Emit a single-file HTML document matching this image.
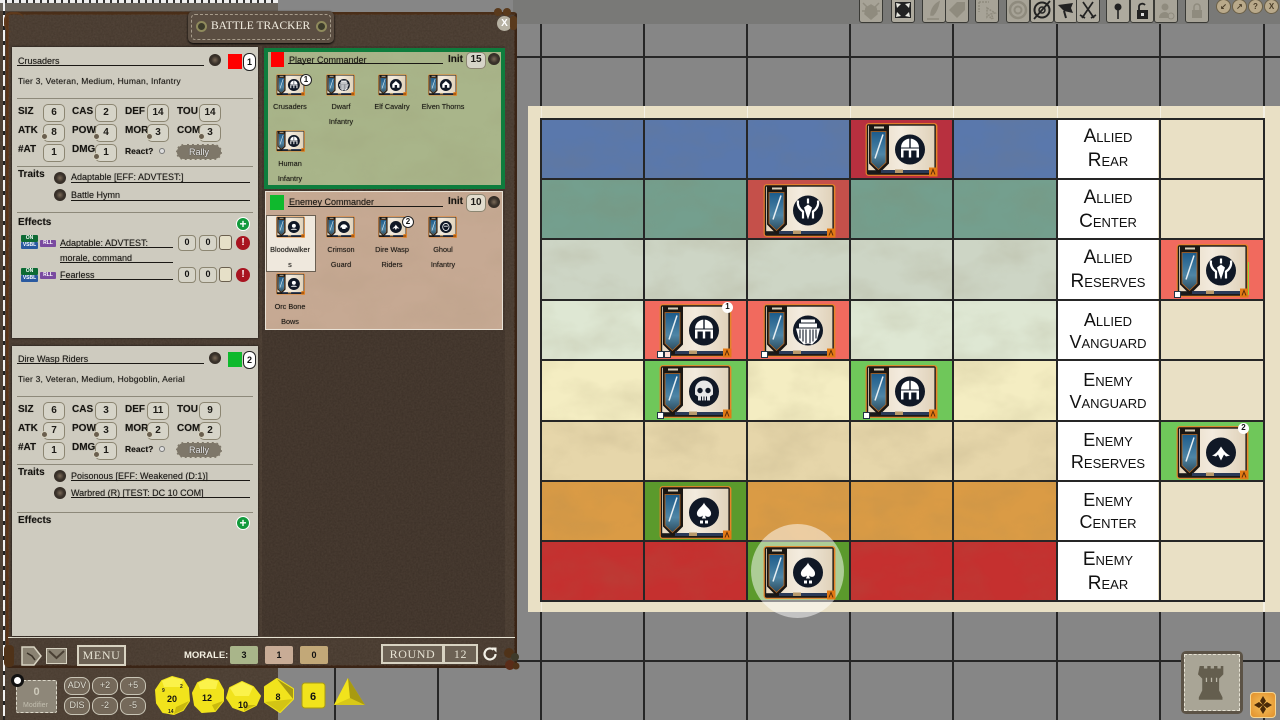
<!DOCTYPE html>
<html><head><meta charset="utf-8"><title>Battle Tracker</title>
<style>
html,body{margin:0;padding:0;width:1280px;height:720px;overflow:hidden;background:#848484;font-family:"Liberation Sans",sans-serif;color:#111}
div,svg,span{position:absolute;box-sizing:border-box}
.x{white-space:nowrap;line-height:12px;font-size:9px;color:#15130f;text-shadow:0 0 1px rgba(0,0,0,.35)}
.b{font-weight:bold;font-size:10px}
.l{height:1px;background:#1a1814}
.d{height:1px;background:#8d897a;left:17px;width:236px}
.v{width:2px;background:#262626}
.h{height:2px;background:#262626}
.s{width:22px;height:18px;border:1.5px solid #8c8672;border-radius:5px;background:#d6d4c8;text-align:center;font:bold 10px/15px "Liberation Sans",sans-serif;color:#1c1a16}
.r{width:7px;height:7px;border-radius:50%;background:#6a5f4e;border:1.5px solid #d8d4c2}
.k{width:12px;height:12px;border-radius:50%;background:radial-gradient(circle,#7a6a58 0,#3b332b 45%,#2a241e 100%)}
.c{position:absolute;text-align:center;font-size:7.3px;line-height:15px;width:52px;color:#15130f;text-shadow:0 0 1px rgba(0,0,0,.35)}
.tk{width:73px;height:55px}
.sm{width:29px;height:22px}
.bd{width:12px;height:12px;border-radius:50%;background:#fff;border:1px solid #222;font:bold 8px/10px "Liberation Sans",sans-serif;text-align:center;color:#111}
.lab{left:1058px;width:100px;text-align:center;font-size:19px;line-height:24px;font-variant:small-caps;color:#111;background:#fff;height:59px;padding-top:6px}
.tb{top:-3px;width:24px;height:26px;background:#a7a397;border:1px solid #3a3a36;border-radius:3px}
.on{background:#aeaa9e}
.rb{top:-1px;width:15px;height:15px;border-radius:50%;background:#b9a98a;border:1px solid #6b6048;font:bold 8px/13px "Liberation Sans",sans-serif;color:#4a3d28;text-align:center}
.m{width:26px;height:18px;border:1.5px solid #c9c5b6;border-radius:8px;background:#75695a;color:#e8e4d6;font-size:9px;line-height:15px;text-align:center;text-shadow:0 0 1px #222}
.bar{border:2px solid #d8d3c2;background:#6c6154;color:#e6e2d3;font:12px/17px "Liberation Serif",serif;text-align:center;letter-spacing:.6px}
.mr{top:646px;width:28px;height:18px;border-radius:2px;font:bold 9px/18px "Liberation Sans",sans-serif;text-align:center}
.ef{width:18px;height:16px;border:1.5px solid #8c8672;border-radius:4px;background:#d6d4c8;text-align:center;font:bold 9px/13px "Liberation Sans",sans-serif}
.q{width:7px;height:7px;background:#fff;border:1px solid #234}
</style></head><body>
<svg width="0" height="0" style="left:0;top:0">
<defs>
<linearGradient id="bl" x1="0" y1="0" x2="0" y2="1"><stop offset="0" stop-color="#1c5a8a"/><stop offset=".6" stop-color="#4f86a6"/><stop offset="1" stop-color="#2c4a5c"/></linearGradient>
<linearGradient id="cr" x1="0" y1="0" x2="1" y2="0"><stop offset="0" stop-color="#e6d8c0"/><stop offset=".5" stop-color="#f3ebde"/><stop offset="1" stop-color="#e0d2ba"/></linearGradient>
<filter id="lea" x="0" y="0" width="100%" height="100%"><feTurbulence type="fractalNoise" baseFrequency=".55" numOctaves="3" seed="4"/><feColorMatrix values="0 0 0 0 .1  0 0 0 0 .07  0 0 0 0 .05  .9 0 0 0 -.15"/></filter>
<filter id="par" x="0" y="0" width="100%" height="100%"><feTurbulence type="fractalNoise" baseFrequency=".018 .03" numOctaves="4" seed="9"/><feColorMatrix values="0 0 0 0 .25  0 0 0 0 .2  0 0 0 0 .1  1.6 0 0 0 -.62"/></filter>
<g id="tok">
<rect x=".6" y=".6" width="71.8" height="52.8" rx="3" fill="#e6842a"/>
<rect x="1.8" y="1.8" width="69" height="50.4" rx="2" fill="#1a1a1a"/>
<rect x="3.200" y="3.200" width="66.200" height="44.500" fill="url(#cr)"/>
<polygon points="4,2.500 24,2.500 24,41 14,51 4,41" fill="#1a1612"/>
<polygon points="6,9 21,9 21,40 13.5,47 6,40" fill="url(#bl)" stroke="#b8661f" stroke-width=".8"/>
<line x1="10" y1="36" x2="18" y2="12" stroke="#e6eef2" stroke-width="1.5"/>
<rect x="9" y="4" width="10" height="2" fill="#d8cdb8"/>
<rect x="16" y="47.5" width="50" height="3" fill="#2a3a58"/>
<rect x="30" y="47" width="8" height="3.5" fill="#b89a6c"/>
<rect x="64" y="45" width="8.5" height="9" fill="#e27a14"/>
<path d="M66 52l2-5 2 5" stroke="#5a2a08" fill="none"/>
<circle cx="45" cy="27" r="15" fill="#101826"/>
</g>
<g id="helm" fill="#fff"><path d="M36 25a9 9 0 0 1 8.300-8.900V25zM45.700 16.100A9 9 0 0 1 54 25h-8.300z"/><rect x="36" y="26" width="18" height="2"/><rect x="36" y="28" width="2.500" height="7"/><rect x="43.800" y="28" width="2.400" height="7"/><rect x="51.500" y="28" width="2.500" height="7"/></g>
<g id="dwarf" fill="#fff"><path d="M38 16h14v3H38zM36 20h18v4H36z"/><path d="M33 25h24l-3 11-5 5-4-1-4 1-5-5z"/><path d="M37 26v9M40 26v12M43 26v14M47 26v14M50 26v12M53 26v9" stroke="#101826" stroke-width="1.100"/></g>
<g id="skull" fill="#e8e8e8"><path d="M36 25a9 9 0 0 1 18 0v5l-3 2v4H39v-4l-3-2z"/><circle cx="41" cy="26" r="2.700" fill="#101826"/><circle cx="49" cy="26" r="2.700" fill="#101826"/><path d="M42.500 32v4M45 32v4M47.500 32v4" stroke="#101826"/></g>
<g id="spade" fill="#fff"><path d="M45 17c1 4 8 7 7 12-1 3-4 3-6 1l1 3h-4l1-3c-2 2-5 2-6-1-1-5 6-8 7-12z"/><rect x="41" y="35" width="3" height="3"/><rect x="46" y="35" width="3" height="3"/></g>
<g id="elf" fill="none" stroke="#fff" stroke-width="2.200"><path d="M35 17c-1 6 2 9 5 11v7M55 17c1 6-2 9-5 11v7M45 15v5"/><path d="M41 24l4-3 4 3-4 12z" fill="#fff" stroke="none"/></g>
<g id="hood" fill="#fff"><path d="M36 30c3-1 6-4 9-9 3 5 6 8 9 9l-4 1-2-2-3 6-3-6-2 2z"/></g>
<g id="orc" fill="#fff"><circle cx="45" cy="24" r="5"/><path d="M37 34c2-4 14-4 16 0z"/></g>
<g id="dome" fill="#fff"><path d="M36 29a9 9 0 0 1 18 0l-4-1-1 4h-8l-1-4z"/></g>
<g id="house" fill="#fff"><path d="M45 17l9 8v9H36v-9zM42 27v7h6v-7z" fill-rule="evenodd"/></g>
<g id="face" fill="none" stroke="#fff" stroke-width="2"><ellipse cx="45" cy="27" rx="8" ry="9"/><path d="M40 25h10"/></g>
</defs></svg>

<!-- grey world with grid -->
<div style="left:0;top:0;width:1280px;height:720px;background:#868686"></div>
<div style="left:513px;top:0;width:767px;height:24px;background:#797977"></div>
<div class="v" style="left:334px;top:660px;height:60px"></div>
<div class="v" style="left:437px;top:660px;height:60px"></div>
<div class="v" style="left:540px;top:24px;height:696px"></div>
<div class="v" style="left:643px;top:24px;height:696px"></div>
<div class="v" style="left:746px;top:24px;height:696px"></div>
<div class="v" style="left:849px;top:24px;height:696px"></div>
<div class="v" style="left:952px;top:24px;height:696px"></div>
<div class="v" style="left:1056px;top:24px;height:696px"></div>
<div class="v" style="left:1159px;top:24px;height:696px"></div>
<div class="v" style="left:1263px;top:24px;height:696px"></div>
<div class="h" style="left:513px;top:56px;width:767px"></div>
<div class="h" style="left:513px;top:660px;width:767px"></div>

<!-- map -->
<div style="left:528px;top:106px;width:752px;height:506px;background:#e9e0c5"></div>
<div style="left:541px;top:106px;width:1px;height:506px;background:#fff6"></div>
<div style="left:644px;top:106px;width:1px;height:12px;background:#fff8"></div>
<div style="left:747px;top:106px;width:1px;height:12px;background:#fff8"></div>
<div style="left:850px;top:106px;width:1px;height:12px;background:#fff8"></div>
<div style="left:953px;top:106px;width:1px;height:12px;background:#fff8"></div>
<div style="left:1057px;top:106px;width:1px;height:12px;background:#fff8"></div>
<div style="left:1160px;top:106px;width:1px;height:12px;background:#fff8"></div>
<div style="left:1263px;top:106px;width:2px;height:506px;background:#fff8"></div>

<div style="left:541px;top:119px;width:515px;height:60px;background:#5a78ac"></div>
<div style="left:541px;top:180px;width:515px;height:59px;background:#749f8e"></div>
<div style="left:541px;top:240px;width:515px;height:60px;background:#cdd5c5"></div>
<div style="left:541px;top:301px;width:515px;height:59px;background:#dee7d3"></div>
<div style="left:541px;top:361px;width:515px;height:60px;background:#f4edc2"></div>
<div style="left:541px;top:422px;width:515px;height:59px;background:#e6d6aa"></div>
<div style="left:541px;top:482px;width:515px;height:59px;background:#da9b45"></div>
<div style="left:541px;top:542px;width:515px;height:59px;background:#c5302f"></div>
<svg style="left:541px;top:119px" width="515" height="482"><rect width="515" height="482" filter="url(#par)" opacity=".18"/></svg>
<!-- highlighted cells -->
<div style="left:851px;top:119px;width:102px;height:60px;background:#b8303f"></div>
<div style="left:748px;top:180px;width:102px;height:59px;background:#c5504a"></div>
<div style="left:1161px;top:240px;width:103px;height:60px;background:#f16a5e"></div>
<div style="left:645px;top:301px;width:102px;height:59px;background:#f16a5e"></div>
<div style="left:748px;top:301px;width:102px;height:59px;background:#f16a5e"></div>
<div style="left:645px;top:361px;width:102px;height:60px;background:#6fc75a"></div>
<div style="left:851px;top:361px;width:102px;height:60px;background:#6fc75a"></div>
<div style="left:1161px;top:422px;width:103px;height:59px;background:#6fc75a"></div>
<div style="left:645px;top:482px;width:102px;height:59px;background:#5b9a2c"></div>
<div style="left:748px;top:542px;width:102px;height:59px;background:#5b9a2c"></div>

<div class="lab" style="top:119px">Allied<br>Rear</div>
<div class="lab" style="top:180px">Allied<br>Center</div>
<div class="lab" style="top:240px">Allied<br>Reserves</div>
<div class="lab" style="top:301px;height:59px;padding-top:8px;line-height:22px;font-size:18px">Allied<br>Vanguard</div>
<div class="lab" style="top:361px;height:60px;padding-top:8px;line-height:22px;font-size:18px">Enemy<br>Vanguard</div>
<div class="lab" style="top:422px;height:59px;padding-top:7px;line-height:22px;font-size:18px">Enemy<br>Reserves</div>
<div class="lab" style="top:482px;height:59px;padding-top:7px;line-height:22px;font-size:18px">Enemy<br>Center</div>
<div class="lab" style="top:542px;height:59px;padding-top:6px">Enemy<br>Rear</div>

<div class="h" style="left:541px;top:118px;width:723px"></div>
<div class="h" style="left:541px;top:178px;width:723px"></div>
<div class="h" style="left:541px;top:238px;width:723px"></div>
<div class="h" style="left:541px;top:299px;width:723px"></div>
<div class="h" style="left:541px;top:359px;width:723px"></div>
<div class="h" style="left:541px;top:420px;width:723px"></div>
<div class="h" style="left:541px;top:480px;width:723px"></div>
<div class="h" style="left:541px;top:540px;width:723px"></div>
<div class="h" style="left:541px;top:600px;width:723px"></div>
<div class="v" style="left:540px;top:118px;height:484px"></div>
<div class="v" style="left:643px;top:118px;height:484px"></div>
<div class="v" style="left:746px;top:118px;height:484px"></div>
<div class="v" style="left:849px;top:118px;height:484px"></div>
<div class="v" style="left:952px;top:118px;height:484px"></div>
<div class="v" style="left:1056px;top:118px;height:484px"></div>
<div class="v" style="left:1159px;top:118px;height:484px"></div>
<div class="v" style="left:1263px;top:118px;height:484px"></div>

<!-- map tokens -->
<svg class="tk" style="left:865px;top:122px" viewBox="0 0 73 54"><use href="#tok"/><use href="#helm"/></svg>
<svg class="tk" style="left:763px;top:183px" viewBox="0 0 73 54"><use href="#tok"/><use href="#elf"/></svg>
<svg class="tk" style="left:1176px;top:243px" viewBox="0 0 73 54"><use href="#tok"/><use href="#elf"/></svg>
<div class="q" style="left:1174px;top:291px"></div>
<div style="left:1248px;top:262px;width:1px;height:33px;background:#8fd23a"></div>
<svg class="tk" style="left:659px;top:303px" viewBox="0 0 73 54"><use href="#tok"/><use href="#helm"/></svg>
<div class="bd" style="left:722px;top:302px;width:11px;height:11px;line-height:9px;border:0">1</div>
<div class="q" style="left:657px;top:351px"></div><div class="q" style="left:664px;top:351px;background:#ffe0d8"></div>
<svg class="tk" style="left:763px;top:303px" viewBox="0 0 73 54"><use href="#tok"/><use href="#dwarf"/></svg>
<div class="q" style="left:761px;top:351px"></div>
<svg class="tk" style="left:659px;top:364px" viewBox="0 0 73 54"><use href="#tok"/><use href="#skull"/></svg>
<div class="q" style="left:657px;top:412px"></div>
<svg class="tk" style="left:865px;top:364px" viewBox="0 0 73 54"><use href="#tok"/><use href="#helm"/></svg>
<div class="q" style="left:863px;top:412px"></div>
<svg class="tk" style="left:1176px;top:425px" viewBox="0 0 73 54"><use href="#tok"/><use href="#hood"/></svg>
<div class="bd" style="left:1238px;top:423px;width:11px;height:11px;line-height:9px;border:0">2</div>
<svg class="tk" style="left:659px;top:485px" viewBox="0 0 73 54"><use href="#tok"/><use href="#spade"/></svg>
<div style="left:751px;top:524px;width:93px;height:94px;border-radius:50%;background:rgba(255,255,255,.5)"></div>
<svg class="tk" style="left:763px;top:545px" viewBox="0 0 73 54"><use href="#tok"/><use href="#spade"/></svg>

<!-- toolbar -->
<div class="tb" style="left:859px"><svg width="22" height="24" viewBox="0 0 22 24"><path d="M11 7l5 3 1 6-6 5-6-5 1-6zM3 5l4 4M19 5l-4 4M2 13h3M20 13h-3" stroke="#8f8b7e" stroke-width="1.500" fill="#8f8b7e"/></svg></div>
<div class="tb on" style="left:891px"><svg width="22" height="24" viewBox="0 0 22 24"><rect x="3" y="4" width="16" height="16" fill="#222"/><path d="M4 5l5 1-4 4zM18 5l-5 1 4 4zM4 19l5-1-4-4zM18 19l-5-1 4-4z" fill="#e8e8e0"/></svg></div>
<div class="tb" style="left:922px"><svg width="22" height="24" viewBox="0 0 22 24"><path d="M8 17c0-6 4-11 8-13-1 5-3 10-6 13zM4 21h12" stroke="#8f8b7e" stroke-width="1.500" fill="#8f8b7e"/></svg></div>
<div class="tb" style="left:945px"><svg width="22" height="24" viewBox="0 0 22 24"><path d="M3 12l8-8h8v8l-8 8z" fill="#8f8b7e"/></svg></div>
<div class="tb" style="left:975px"><svg width="22" height="24" viewBox="0 0 22 24"><path d="M3 4h10M3 4v10M11 10l8 5-4 1 2 4-2 1-2-4-2 2z" stroke="#8f8b7e" stroke-width="1.500" stroke-dasharray="2 1" fill="none"/></svg></div>
<div class="tb" style="left:1006px"><svg width="22" height="24" viewBox="0 0 22 24"><circle cx="11" cy="12" r="8" fill="none" stroke="#8f8b7e" stroke-width="2.500"/><circle cx="11" cy="12" r="3.500" fill="none" stroke="#8f8b7e" stroke-width="2"/></svg></div>
<div class="tb on" style="left:1030px"><svg width="22" height="24" viewBox="0 0 22 24"><circle cx="11" cy="12" r="7.500" fill="none" stroke="#222" stroke-width="2"/><circle cx="11" cy="12" r="3" fill="none" stroke="#222" stroke-width="1.500"/><path d="M3 21L19 3" stroke="#222" stroke-width="1.800"/></svg></div>
<div class="tb on" style="left:1054px"><svg width="22" height="24" viewBox="0 0 22 24"><path d="M3 7l15-2-2 5 2 5-9-2z" fill="#222"/><path d="M9 13l2 7" stroke="#222" stroke-width="2"/></svg></div>
<div class="tb on" style="left:1076px"><svg width="22" height="24" viewBox="0 0 22 24"><path d="M6 4l11 16M16 4L5 20M3 17l5 3M19 17l-5 3" stroke="#222" stroke-width="1.700"/></svg></div>
<div class="tb on" style="left:1106px"><svg width="22" height="24" viewBox="0 0 22 24"><circle cx="11" cy="9" r="3.500" fill="#222"/><path d="M11 12v9" stroke="#222" stroke-width="1.600"/></svg></div>
<div class="tb on" style="left:1130px"><svg width="22" height="24" viewBox="0 0 22 24"><rect x="6" y="12" width="11" height="9" fill="#222"/><path d="M8 12V8a3.500 3.500 0 0 1 6-1" stroke="#222" stroke-width="1.800" fill="none"/><rect x="10" y="15" width="3" height="3" fill="#ddd"/></svg></div>
<div class="tb" style="left:1154px"><svg width="22" height="24" viewBox="0 0 22 24"><circle cx="10" cy="9" r="3.500" fill="#8f8b7e"/><path d="M4 20c0-4 3-6 6-6s4 2 4 6z" fill="#8f8b7e"/><circle cx="16" cy="18" r="3" fill="none" stroke="#8f8b7e"/></svg></div>
<div class="tb" style="left:1185px"><svg width="22" height="24" viewBox="0 0 22 24"><rect x="6" y="12" width="10" height="8" fill="#8f8b7e"/><path d="M8 12V9a3 3 0 0 1 6 0v3" stroke="#8f8b7e" stroke-width="1.500" fill="none"/></svg></div>
<div class="rb" style="left:1216px">&#8601;</div>
<div class="rb" style="left:1232px">&#8599;</div>
<div class="rb" style="left:1248px">?</div>
<div class="rb" style="left:1264px">X</div>

<!-- tower + orange -->
<div style="left:1181px;top:651px;width:62px;height:63px;background:#5c5346;border-radius:5px"></div>
<div style="left:1184px;top:654px;width:56px;height:57px;background:#a9a596;border:1px dashed #e6e2d4"></div>
<svg style="left:1198px;top:662px" width="27" height="40" viewBox="0 0 32 44"><path d="M2 3h5v3h4V3h4v3h4V3h4v3h4V3h3v10l-5 5v14l4 8v3H1v-3l4-8V18l-5-5z" fill="#645e4e"/><path d="M10 17v5M16 17v5M22 17v5" stroke="#bdb9aa" stroke-width="1.500"/></svg>
<div style="left:1250px;top:692px;width:26px;height:26px;background:radial-gradient(circle,#f6c25e,#e2902a);border:1.500px solid #f6d692;border-radius:4px"></div>
<svg style="left:1252px;top:694px" width="22" height="22" viewBox="0 0 22 22"><path d="M11 2l3 5-3 4-3-4zM11 20l3-5-3-4-3 4zM2 11l5-3 4 3-4 3zM20 11l-5-3-4 3 4 3z" fill="#4a2a08"/></svg>

<!-- back leather strip -->
<div style="left:0;top:0;width:278px;height:720px;background:#4a3d31"></div>
<svg style="left:0;top:0" width="278" height="720"><rect width="278" height="720" filter="url(#lea)"/></svg>
<div style="left:0;top:3px;width:278px;height:8px;background:#6a645c"></div>
<div style="left:0;top:0;width:278px;height:3px;background:repeating-linear-gradient(90deg,#eee 0 5px,#333 5px 7px)"></div>
<div style="left:3px;top:0;width:1.500px;height:720px;background:repeating-linear-gradient(180deg,#f2f2f2 0 11px,#222 11px 15px)"></div>

<!-- panel -->
<div style="left:6px;top:12px;width:511px;height:656px;background:#46392e;border-radius:3px;border:3px solid #3a2415;border-left-color:#5a3418;border-top-color:#4a2e18"></div>
<svg style="left:8px;top:14px" width="507" height="652"><rect width="507" height="652" filter="url(#lea)"/></svg>
<div style="left:262px;top:46px;width:243px;height:590px;background:#3e3229"></div>
<svg style="left:262px;top:46px" width="243" height="590"><rect width="243" height="590" filter="url(#lea)" opacity=".7"/></svg>
<div style="left:8px;top:637px;width:507px;height:1px;background:#e8e4d4"></div>
<div style="left:4px;top:12px;width:20px;height:20px;border:2px solid #5f3a1c;border-radius:8px;border-right:0;border-bottom:0"></div>

<!-- title badge -->
<div style="left:188px;top:11px;width:146px;height:32px;background:#5b4e42;border-radius:5px;box-shadow:0 1px 2px #000"></div>
<div style="left:191px;top:14px;width:140px;height:26px;border:1px dashed #a89d8c;border-radius:4px"></div>
<div style="left:196px;top:21px;width:11px;height:11px;border-radius:50%;background:#3b3a2a;border:2px solid #8f8a5c"></div>
<div style="left:316px;top:21px;width:11px;height:11px;border-radius:50%;background:#3b3a2a;border:2px solid #8f8a5c"></div>
<div class="x" style="left:211px;top:19px;color:#f3efe2;font:11.500px/14px 'Liberation Serif',serif;text-shadow:none">BATTLE TRACKER</div>
<div style="left:497px;top:16px;width:15px;height:15px;border-radius:50%;background:#b6b1a2;color:#fff;font:bold 10px/15px 'Liberation Sans';text-align:center">X</div>
<div style="left:494px;top:8px;width:8px;height:8px;border-radius:50%;background:#5a3a1c"></div>
<div style="left:503px;top:8px;width:8px;height:8px;border-radius:50%;background:#5a3a1c"></div>
<div style="left:510px;top:16px;width:7px;height:14px;border-radius:3px;background:#5a3a1c"></div>

<!-- sheet 1 -->
<div style="left:12px;top:47px;width:246px;height:291px;background:#cecbbf;box-shadow:0 0 2px #111"></div>
<!-- sheet 2 -->
<div style="left:12px;top:346px;width:246px;height:290px;background:#cecbbf;box-shadow:0 0 2px #111"></div>

<div style="left:0;top:0;width:0;height:0">
<div class="x" style="left:18px;top:55px">Crusaders</div><div class="l" style="left:17px;top:65px;width:187px"></div>
<div class="k" style="left:209px;top:54px"></div>
<div style="left:228px;top:54px;width:14px;height:15px;background:#f00"></div>
<div class="bd" style="left:243px;top:53px;width:13px;height:18px;border-radius:6px;font-size:9px;line-height:16px">1</div>
<div class="x" style="left:18px;top:75px;font-size:8.500px;letter-spacing:.18px">Tier 3, Veteran, Medium, Human, Infantry</div>
<div class="d" style="top:98px"></div>
<div class="x b" style="left:18px;top:106px">SIZ</div><div class="s" style="left:43px;top:104px">6</div>
<div class="x b" style="left:72px;top:106px">CAS</div><div class="s" style="left:95px;top:104px">2</div>
<div class="x b" style="left:125px;top:106px">DEF</div><div class="s" style="left:147px;top:104px">14</div>
<div class="x b" style="left:177px;top:106px">TOU</div><div class="s" style="left:199px;top:104px">14</div>
<div class="x b" style="left:18px;top:125px">ATK</div><div class="s" style="left:43px;top:124px">8</div><div class="r" style="left:41px;top:133px"></div>
<div class="x b" style="left:72px;top:125px">POW</div><div class="s" style="left:95px;top:124px">4</div><div class="r" style="left:93px;top:133px"></div>
<div class="x b" style="left:125px;top:125px">MOR</div><div class="s" style="left:147px;top:124px">3</div><div class="r" style="left:146px;top:133px"></div>
<div class="x b" style="left:177px;top:125px">COM</div><div class="s" style="left:199px;top:124px">3</div><div class="r" style="left:198px;top:133px"></div>
<div class="x b" style="left:18px;top:144px">#AT</div><div class="s" style="left:43px;top:144px">1</div>
<div class="x b" style="left:72px;top:144px">DMG</div><div class="s" style="left:95px;top:144px">1</div><div class="r" style="left:93px;top:153px"></div>
<div class="x" style="left:125px;top:145px;font-weight:bold;font-size:8.500px">React?</div>
<div style="left:159px;top:148px;width:6px;height:6px;border-radius:50%;border:1px solid #777;background:#ddd"></div>
<div style="left:176px;top:144px;width:46px;height:16px;border-radius:8px;background:#7e7769;border:1px dashed #cfcbbc;color:#eee;font:9px/14px 'Liberation Sans';text-align:center;text-shadow:0 0 1px #000">Rally</div>
<div class="d" style="top:166px"></div>
<div class="x b" style="left:18px;top:169px">Traits</div>
<div class="k" style="left:54px;top:172px"></div><div class="x" style="left:71px;top:171px">Adaptable [EFF: ADVTEST:]</div><div class="l" style="left:71px;top:182px;width:179px"></div>
<div class="k" style="left:54px;top:189px"></div><div class="x" style="left:71px;top:189px">Battle Hymn</div><div class="l" style="left:71px;top:200px;width:179px"></div>
<div class="d" style="top:212px"></div>
<div class="x b" style="left:18px;top:217px">Effects</div>
<div style="left:236px;top:217px;width:14px;height:14px;border-radius:50%;background:#129a3c;border:1px solid #fff;color:#fff;font:bold 12px/12px 'Liberation Sans';text-align:center">+</div>

<div style="left:21px;top:235px;width:17px;height:7px;background:#0d6a34;color:#fff;font:bold 5px/7px 'Liberation Sans';text-align:center;border-radius:1px">ON</div>
<div style="left:21px;top:242px;width:17px;height:7px;background:#2a5aa0;color:#fff;font:bold 5px/7px 'Liberation Sans';text-align:center;border-radius:1px">VSBL</div>
<div style="left:40px;top:240px;width:16px;height:7px;background:#7a4aa0;color:#fff;font:bold 5px/7px 'Liberation Sans';text-align:center;border-radius:1px">RLL</div>
<div class="x" style="left:60px;top:237px">Adaptable: ADVTEST:</div><div class="l" style="left:60px;top:247px;width:113px"></div>
<div class="x" style="left:60px;top:252px">morale, command</div><div class="l" style="left:60px;top:262px;width:113px"></div>
<div class="ef" style="left:178px;top:235px">0</div><div class="ef" style="left:199px;top:235px">0</div>
<div style="left:219px;top:235px;width:13px;height:15px;background:#e6e0c8;border:1px solid #6a5f4e;border-radius:3px"></div>
<div style="left:236px;top:236px;width:14px;height:14px;border-radius:50%;background:#a81420;color:#fff;font:bold 10px/14px 'Liberation Sans';text-align:center">!</div>

<div style="left:21px;top:268px;width:17px;height:7px;background:#0d6a34;color:#fff;font:bold 5px/7px 'Liberation Sans';text-align:center;border-radius:1px">ON</div>
<div style="left:21px;top:275px;width:17px;height:7px;background:#2a5aa0;color:#fff;font:bold 5px/7px 'Liberation Sans';text-align:center;border-radius:1px">VSBL</div>
<div style="left:40px;top:272px;width:16px;height:7px;background:#7a4aa0;color:#fff;font:bold 5px/7px 'Liberation Sans';text-align:center;border-radius:1px">RLL</div>
<div class="x" style="left:60px;top:269px">Fearless</div><div class="l" style="left:60px;top:279px;width:113px"></div>
<div class="ef" style="left:178px;top:267px">0</div><div class="ef" style="left:199px;top:267px">0</div>
<div style="left:219px;top:267px;width:13px;height:15px;background:#e6e0c8;border:1px solid #6a5f4e;border-radius:3px"></div>
<div style="left:236px;top:268px;width:14px;height:14px;border-radius:50%;background:#a81420;color:#fff;font:bold 10px/14px 'Liberation Sans';text-align:center">!</div>
</div>

<div style="left:0;top:298px;width:0;height:0">
<div class="x" style="left:18px;top:55px">Dire Wasp Riders</div><div class="l" style="left:17px;top:65px;width:187px"></div>
<div class="k" style="left:209px;top:54px"></div>
<div style="left:228px;top:54px;width:14px;height:15px;background:#0fb92d"></div>
<div class="bd" style="left:243px;top:53px;width:13px;height:18px;border-radius:6px;font-size:9px;line-height:16px">2</div>
<div class="x" style="left:18px;top:75px;font-size:8.500px;letter-spacing:.18px">Tier 3, Veteran, Medium, Hobgoblin, Aerial</div>
<div class="d" style="top:98px"></div>
<div class="x b" style="left:18px;top:106px">SIZ</div><div class="s" style="left:43px;top:104px">6</div>
<div class="x b" style="left:72px;top:106px">CAS</div><div class="s" style="left:95px;top:104px">3</div>
<div class="x b" style="left:125px;top:106px">DEF</div><div class="s" style="left:147px;top:104px">11</div>
<div class="x b" style="left:177px;top:106px">TOU</div><div class="s" style="left:199px;top:104px">9</div>
<div class="x b" style="left:18px;top:125px">ATK</div><div class="s" style="left:43px;top:124px">7</div><div class="r" style="left:41px;top:133px"></div>
<div class="x b" style="left:72px;top:125px">POW</div><div class="s" style="left:95px;top:124px">3</div><div class="r" style="left:93px;top:133px"></div>
<div class="x b" style="left:125px;top:125px">MOR</div><div class="s" style="left:147px;top:124px">2</div><div class="r" style="left:146px;top:133px"></div>
<div class="x b" style="left:177px;top:125px">COM</div><div class="s" style="left:199px;top:124px">2</div><div class="r" style="left:198px;top:133px"></div>
<div class="x b" style="left:18px;top:144px">#AT</div><div class="s" style="left:43px;top:144px">1</div>
<div class="x b" style="left:72px;top:144px">DMG</div><div class="s" style="left:95px;top:144px">1</div><div class="r" style="left:93px;top:153px"></div>
<div class="x" style="left:125px;top:145px;font-weight:bold;font-size:8.500px">React?</div>
<div style="left:159px;top:148px;width:6px;height:6px;border-radius:50%;border:1px solid #777;background:#ddd"></div>
<div style="left:176px;top:144px;width:46px;height:16px;border-radius:8px;background:#7e7769;border:1px dashed #cfcbbc;color:#eee;font:9px/14px 'Liberation Sans';text-align:center;text-shadow:0 0 1px #000">Rally</div>
<div class="d" style="top:166px"></div>
<div class="x b" style="left:18px;top:169px">Traits</div>
<div class="k" style="left:54px;top:172px"></div><div class="x" style="left:71px;top:172px">Poisonous [EFF: Weakened (D:1)]</div><div class="l" style="left:71px;top:182px;width:179px"></div>
<div class="k" style="left:54px;top:189px"></div><div class="x" style="left:71px;top:189px">Warbred (R) [TEST: DC 10 COM]</div><div class="l" style="left:71px;top:199px;width:179px"></div>
<div class="d" style="top:214px"></div>
<div class="x b" style="left:18px;top:217px">Effects</div>
<div style="left:236px;top:218px;width:14px;height:14px;border-radius:50%;background:#129a3c;border:1px solid #fff;color:#fff;font:bold 12px/12px 'Liberation Sans';text-align:center">+</div>
</div>

<!-- player box -->
<div style="left:264px;top:48px;width:241px;height:141px;background:#a9b58a;border:4px solid #0e7d3d"></div>
<svg style="left:268px;top:52px" width="233" height="133"><rect width="233" height="133" filter="url(#par)" opacity=".12"/></svg>
<div style="left:271px;top:52px;width:13px;height:15px;background:#f00"></div>
<div class="x" style="left:289px;top:54px">Player Commander</div><div class="l" style="left:288px;top:63px;width:155px"></div>
<div class="x b" style="left:448px;top:54px">Init</div>
<div class="s" style="left:466px;top:52px;width:20px;height:17px;background:#d6d4c8;line-height:14px">15</div>
<div class="k" style="left:488px;top:53px"></div>
<svg class="sm" style="left:276px;top:74px" viewBox="0 0 73 54"><use href="#tok"/><use href="#helm"/></svg>
<div class="bd" style="left:300px;top:74px">1</div>
<svg class="sm" style="left:326px;top:74px" viewBox="0 0 73 54"><use href="#tok"/><use href="#dwarf"/></svg>
<svg class="sm" style="left:378px;top:74px" viewBox="0 0 73 54"><use href="#tok"/><use href="#house"/></svg>
<svg class="sm" style="left:428px;top:74px" viewBox="0 0 73 54"><use href="#tok"/><use href="#house"/></svg>
<div class="c" style="left:264px;top:99px">Crusaders</div>
<div class="c" style="left:315px;top:99px">Dwarf<br>Infantry</div>
<div class="c" style="left:366px;top:99px">Elf Cavalry</div>
<div class="c" style="left:417px;top:99px">Elven Thorns</div>
<svg class="sm" style="left:276px;top:130px" viewBox="0 0 73 54"><use href="#tok"/><use href="#helm"/></svg>
<div class="c" style="left:264px;top:156px">Human<br>Infantry</div>

<!-- enemy box -->
<div style="left:265px;top:191px;width:238px;height:139px;background:#c6a993;border:1.500px solid #e9e2d6"></div>
<svg style="left:267px;top:193px" width="234" height="135"><rect width="234" height="135" filter="url(#par)" opacity=".1"/></svg>
<div style="left:270px;top:195px;width:14px;height:15px;background:#0fb92d"></div>
<div class="x" style="left:289px;top:196px">Enemey Commander</div><div class="l" style="left:288px;top:206px;width:155px"></div>
<div class="x b" style="left:448px;top:196px">Init</div>
<div class="s" style="left:466px;top:194px;width:20px;height:18px;background:#e2dccd;line-height:15px">10</div>
<div class="k" style="left:488px;top:196px"></div>
<div style="left:266px;top:215px;width:50px;height:57px;background:#efe8dd;border:1px solid #6a5f52"></div>
<svg class="sm" style="left:276px;top:216px" viewBox="0 0 73 54"><use href="#tok"/><use href="#orc"/></svg>
<svg class="sm" style="left:326px;top:216px" viewBox="0 0 73 54"><use href="#tok"/><use href="#dome"/></svg>
<svg class="sm" style="left:378px;top:216px" viewBox="0 0 73 54"><use href="#tok"/><use href="#hood"/></svg>
<div class="bd" style="left:402px;top:216px">2</div>
<svg class="sm" style="left:428px;top:216px" viewBox="0 0 73 54"><use href="#tok"/><use href="#face"/></svg>
<div class="c" style="left:264px;top:242px">Bloodwalker<br>s</div>
<div class="c" style="left:315px;top:242px">Crimson<br>Guard</div>
<div class="c" style="left:366px;top:242px">Dire Wasp<br>Riders</div>
<div class="c" style="left:417px;top:242px">Ghoul<br>Infantry</div>
<svg class="sm" style="left:276px;top:273px" viewBox="0 0 73 54"><use href="#tok"/><use href="#orc"/></svg>
<div class="c" style="left:264px;top:299px">Orc Bone<br>Bows</div>

<!-- bottom bar -->
<svg style="left:21px;top:646px" width="21" height="20" viewBox="0 0 21 20"><path d="M1 1h12l7 9-7 9H1z" fill="#8a8272" stroke="#d8d3c2" stroke-width="1.500"/><path d="M6 7l5 3 3 4" stroke="#3a3228" stroke-width="1.500" fill="none"/></svg>
<div style="left:46px;top:648px;width:21px;height:16px;background:#8a8272;border:1.500px solid #d8d3c2"></div>
<svg style="left:46px;top:648px" width="21" height="16"><path d="M3 3l7.500 7L18 3" fill="none" stroke="#4a4034" stroke-width="2"/></svg>
<div class="bar" style="left:77px;top:645px;width:49px;height:21px">MENU</div>
<div class="x" style="left:184px;top:650px;color:#f4f0e2;font-weight:bold;font-size:9.500px;text-shadow:none">MORALE:</div>
<div class="mr" style="left:230px;background:#a9b58a">3</div>
<div class="mr" style="left:265px;background:#c8ac96">1</div>
<div class="mr" style="left:300px;background:#c2a878">0</div>
<div class="bar" style="left:381px;top:644px;width:63px;height:20px;line-height:16px">ROUND</div>
<div class="bar" style="left:443px;top:644px;width:35px;height:20px;line-height:16px">12</div>
<svg style="left:482px;top:646px" width="16" height="16" viewBox="0 0 16 16"><path d="M13.500 8a5.500 5.500 0 1 1-2-4.300" fill="none" stroke="#f2f0e6" stroke-width="2.200"/><path d="M9.500 1.500h5v5z" fill="#f2f0e6"/></svg>
<div style="left:4px;top:645px;width:10px;height:22px;border-radius:4px;background:#4f3218"></div>
<svg style="left:497px;top:645px" width="24" height="30"><circle cx="12" cy="8" r="5" fill="#4f3218"/><circle cx="18" cy="12" r="4" fill="#3e3a2a"/><circle cx="13" cy="20" r="5" fill="#5a2c18"/><circle cx="19" cy="21" r="3.500" fill="#4f3218"/></svg>

<!-- modifier & dice strip -->
<div style="left:16px;top:680px;width:41px;height:33px;background:#8e8779;border:1px dashed #dcd8ca;border-radius:2px;text-align:center;color:#cdc9ba;font:bold 11px/22px 'Liberation Sans'">0<div class="x" style="left:6px;top:20px;font-size:7px;color:#c3bfb0;font-weight:normal;line-height:9px;text-shadow:none">Modifier</div></div>
<div style="left:11px;top:674px;width:13px;height:13px;border-radius:50%;background:#fff;border:3px solid #111"></div>
<div class="m" style="left:64px;top:677px">ADV</div><div class="m" style="left:92px;top:677px">+2</div><div class="m" style="left:120px;top:677px">+5</div>
<div class="m" style="left:64px;top:697px">DIS</div><div class="m" style="left:92px;top:697px">-2</div><div class="m" style="left:120px;top:697px">-5</div>

<svg style="left:150px;top:672px" width="220" height="48" viewBox="0 0 220 48">
<g stroke-linejoin="round">
<polygon points="22,5 33,8 38,16 39,29 33,38 24,42 13,40 7,31 6,18 12,9" fill="#f1e31c" stroke="#f1e31c" stroke-width="2"/><polygon points="22,5 33,8 30,15 14,15 12,9" fill="#fbf24a"/><polygon points="39,29 33,38 24,42 26,35" fill="#c9b90e"/>
<text x="22" y="30" font-family="Liberation Sans" font-size="9" font-weight="bold" text-anchor="middle" fill="#111">20</text>
<text x="12" y="20" font-family="Liberation Sans" font-size="5" font-weight="bold" fill="#222">9</text><text x="30" y="16" font-family="Liberation Sans" font-size="5" font-weight="bold" fill="#222">2</text><text x="18" y="41" font-family="Liberation Sans" font-size="5" font-weight="bold" fill="#222">14</text>
<polygon points="57,7 68,9 73,18 73,29 65,39 52,40 45,33 43,21 48,11" fill="#f1e31c" stroke="#f1e31c" stroke-width="2"/><polygon points="57,7 68,9 66,17 50,17 48,11" fill="#fbf24a"/><polygon points="73,29 65,39 62,33" fill="#c9b90e"/>
<text x="57" y="29" font-family="Liberation Sans" font-size="9" font-weight="bold" text-anchor="middle" fill="#111">12</text>
<polygon points="92,10 103,15 110,24 106,33 94,39 83,35 77,26 80,16" fill="#f1e31c" stroke="#f1e31c" stroke-width="2"/><polygon points="92,10 103,15 99,24 85,24 80,16" fill="#fbf24a"/><polygon points="106,33 94,39 94,33" fill="#c9b90e"/>
<text x="93" y="36" font-family="Liberation Sans" font-size="9" font-weight="bold" text-anchor="middle" fill="#111">10</text>
<polygon points="127,7 143,17 143,27 130,40 115,30 115,15" fill="#f1e31c" stroke="#f1e31c" stroke-width="2"/><polygon points="127,7 143,17 143,27" fill="#a89a10"/><polygon points="115,30 130,40 143,27" fill="#d3c414"/>
<text x="128" y="28" font-family="Liberation Sans" font-size="9" font-weight="bold" text-anchor="middle" fill="#111">8</text>
<rect x="152" y="11" width="23" height="25" rx="3" fill="#f1e31c" stroke="#a89a10"/>
<text x="163" y="28" font-family="Liberation Sans" font-size="11" font-weight="bold" text-anchor="middle" fill="#111">6</text>
<polygon points="198,6 184,33 215,33" fill="#d8c818"/><polygon points="198,6 184,33 200,26" fill="#f1e31c"/><polygon points="198,6 215,33 200,26" fill="#a89a10"/>
</g>
</svg>
</body></html>
